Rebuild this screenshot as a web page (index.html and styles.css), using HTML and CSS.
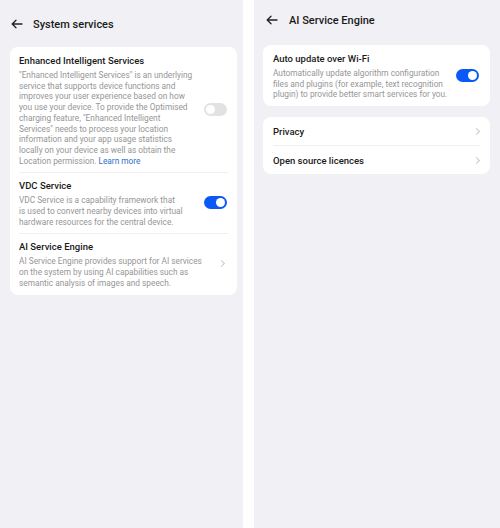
FILE: index.html
```html
<!DOCTYPE html>
<html lang="en">

<head>
    <meta charset="UTF-8">
    <meta name="viewport" content="width=device-width, initial-scale=1.0">
    <title>System services</title>
    <link rel="stylesheet" href="styles.css">
</head>

<body>
    <div class="screens">
        <section class="screen screen-left">
            <header class="topbar">
                <svg class="back" viewBox="0 0 12 10" width="12" height="10">
                    <path d="M11 5H1.5M5 1.2L1.2 5L5 8.8" fill="none" stroke="#222" stroke-width="1.3" stroke-linecap="round" stroke-linejoin="round"/>
                </svg>
                <h1>System services</h1>
            </header>

            <div class="card">
                <div class="item">
                    <div class="item-text">
                        <h2>Enhanced Intelligent Services</h2>
                        <p>"Enhanced Intelligent Services" is an underlying<br>
                            service that supports device functions and<br>
                            improves your user experience based on how<br>
                            you use your device. To provide the Optimised<br>
                            charging feature, "Enhanced Intelligent<br>
                            Services" needs to process your location<br>
                            information and your app usage statistics<br>
                            locally on your device as well as obtain the<br>
                            Location permission. <a href="#">Learn more</a></p>
                    </div>
                    <span class="switch"></span>
                </div>
                <div class="item">
                    <div class="item-text">
                        <h2>VDC Service</h2>
                        <p>VDC Service is a capability framework that<br>
                            is used to convert nearby devices into virtual<br>
                            hardware resources for the central device.</p>
                    </div>
                    <span class="switch on"></span>
                </div>
                <div class="item">
                    <div class="item-text">
                        <h2>AI Service Engine</h2>
                        <p>AI Service Engine provides support for AI services<br>
                            on the system by using AI capabilities such as<br>
                            semantic analysis of images and speech.</p>
                    </div>
                    <span class="chevron"></span>
                </div>
            </div>
        </section>

        <section class="screen screen-right">
            <header class="topbar">
                <svg class="back" viewBox="0 0 12 10" width="12" height="10">
                    <path d="M11 5H1.5M5 1.2L1.2 5L5 8.8" fill="none" stroke="#222" stroke-width="1.3" stroke-linecap="round" stroke-linejoin="round"/>
                </svg>
                <h1>AI Service Engine</h1>
            </header>

            <div class="card">
                <div class="item">
                    <div class="item-text">
                        <h2>Auto update over Wi-Fi</h2>
                        <p>Automatically update algorithm configuration<br>
                            files and plugins (for example, text recognition<br>
                            plugin) to provide better smart services for you.</p>
                    </div>
                    <span class="switch on"></span>
                </div>
            </div>

            <div class="card">
                <div class="row">
                    <span>Privacy</span>
                    <span class="chevron"></span>
                </div>
                <div class="row">
                    <span>Open source licences</span>
                    <span class="chevron"></span>
                </div>
            </div>
        </section>
    </div>
</body>

</html>
```

FILE: styles.css
```css
body {
    margin: 0;
    padding: 0;
    background-color: #ffffff;
    font-family: Roboto, "Liberation Sans", sans-serif;
    color: #1c1c1c;
}

.screens {
    display: flex;
    gap: 11px;
    height: 528px;
}

.screen {
    background-color: #f1f1f5;
    display: flex;
    flex-direction: column;
}

.screen-left {
    width: 243px;
    padding: 0 6px 0 10px;
    box-sizing: border-box;
}

.screen-right {
    width: 246px;
    padding: 0 10px 0 9px;
    box-sizing: border-box;
}

.topbar {
    display: flex;
    align-items: center;
}

.screen-left .topbar {
    padding: 1px 0 0 1px;
    height: 46px;
}

.screen-right .topbar {
    padding-left: 3px;
    height: 40px;
}

.screen-left h1 {
    margin-left: 10px;
}

.screen-right h1 {
    margin-left: 11px;
}

h1 {
    margin: 0;
    font-size: 11px;
    font-weight: 500;
    color: #1a1a1a;
}

.back {
    display: block;
}

.card {
    background-color: white;
    border-radius: 8px;
    padding: 0 9px;
}

.screen-right .card {
    padding: 0 10px;
    margin-bottom: 11px;
    margin-top: 5px;
}

.screen-right .card + .card {
    margin-top: 0;
}

.item {
    display: flex;
    align-items: center;
    justify-content: space-between;
    padding: 6px 0;
}

.item + .item {
    border-top: 1px solid #efefef;
    padding-top: 5px;
}

.item-text {
    flex: 1;
    min-width: 0;
}

h2 {
    margin: 0 0 2px;
    font-size: 9.5px;
    line-height: 15px;
    font-weight: 500;
    color: #1a1a1a;
}

p {
    margin: 0;
    font-size: 8.3px;
    line-height: 10.7px;
    color: #969696;
    white-space: nowrap;
}

p a {
    color: #2f6ec8;
    text-decoration: none;
}

.switch {
    flex-shrink: 0;
    width: 23px;
    height: 13px;
    border-radius: 7px;
    background-color: #e2e2e2;
    position: relative;
    margin-right: 1px;
}

.switch::after {
    content: "";
    position: absolute;
    top: 2px;
    left: 2px;
    width: 9px;
    height: 9px;
    border-radius: 50%;
    background-color: white;
}

.switch.on {
    background-color: #0a59f7;
}

.switch.on::after {
    left: 12px;
}

.chevron {
    flex-shrink: 0;
    width: 4px;
    height: 4px;
    border-top: 1px solid #cacaca;
    border-right: 1px solid #cacaca;
    transform: rotate(45deg);
    margin-right: 4px;
}

.row {
    display: flex;
    align-items: center;
    justify-content: space-between;
    height: 28px;
    font-size: 9.5px;
    font-weight: 500;
    color: #1a1a1a;
}

.row .chevron {
    margin-right: 1px;
}

.row + .row {
    border-top: 1px solid #efefef;
}
```
